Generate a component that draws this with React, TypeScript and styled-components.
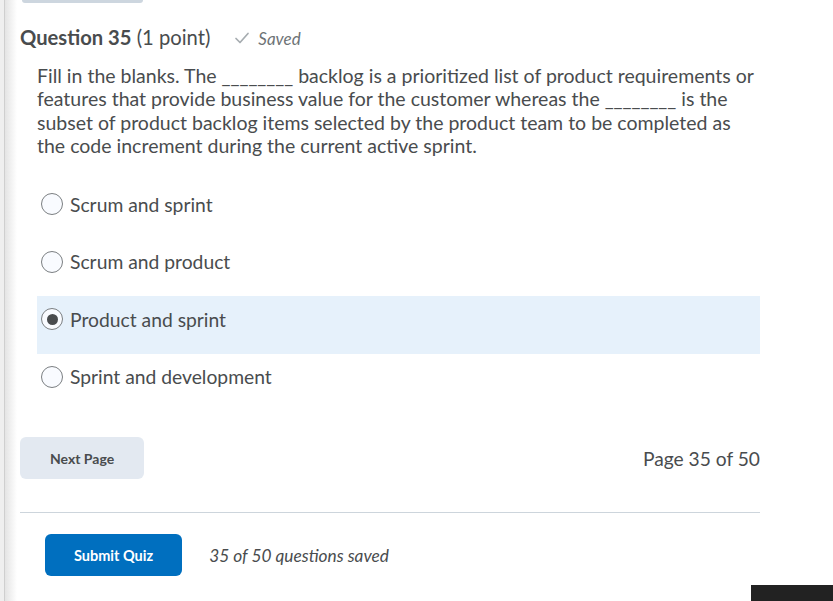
import React from "react";
import styled, { createGlobalStyle } from "styled-components";

const Global = createGlobalStyle`
  html, body { margin: 0; padding: 0; background: #fff; }
  body { font-family: Lato, "Open Sans", sans-serif; color: #494c4e; }
`;

const Frame = styled.div`
  position: relative;
  width: 833px;
  height: 601px;
  overflow: hidden;
  display: flex;
  background: #fff;
`;

const Edge = styled.div`
  width: 4px;
  flex: none;
  background: #efefef;
  border-right: 1px solid #cfcfcf;
`;

const Main = styled.div`
  flex: 1;
  padding: 0 73px 0 15px;
  background: linear-gradient(to right, #e4e4e4 0px, #ffffff 12px, #ffffff 100%);
  display: flex;
  flex-direction: column;
`;

const TopStub = styled.div`
  width: 121px;
  height: 3px;
  margin-left: 2px;
  background: #cdd6df;
  border-radius: 0 0 6px 6px;
`;

const Header = styled.div`
  display: flex;
  align-items: baseline;
  margin-top: 22px;
  height: 26px;
`;

const Title = styled.h2`
  margin: 0;
  font-size: 20.2px;
  font-weight: 400;
  color: #494c4e;
  b { font-weight: 700; }
`;

const Saved = styled.span`
  display: inline-flex;
  align-items: center;
  gap: 8px;
  margin-left: 24px;
  font-size: 17px;
  font-style: italic;
  color: #6e7376;
`;

const Prompt = styled.p`
  margin: 13px 0 0 17px;
  font-size: 19.5px;
  line-height: 23.3px;
  color: #494c4e;
`;

const Options = styled.div`
  margin: 24px 0 0 17px;
  display: flex;
  flex-direction: column;
`;

const Option = styled.label<{ $selected?: boolean }>`
  box-sizing: border-box;
  display: flex;
  align-items: center;
  height: 57.5px;
  padding: 0 0 11px 4px;
  gap: 7px;
  font-size: 19.3px;
  background: ${(p) => (p.$selected ? "#e6f1fb" : "transparent")};
`;

const Radio = styled.span<{ $checked?: boolean }>`
  box-sizing: border-box;
  width: 22px;
  height: 22px;
  border-radius: 50%;
  border: 1px solid #7b7f82;
  background: #f9fbff;
  display: flex;
  align-items: center;
  justify-content: center;
  &::after {
    content: "";
    display: ${(p) => (p.$checked ? "block" : "none")};
    width: 11px;
    height: 11px;
    border-radius: 50%;
    background: #494c4e;
  }
`;

const NavRow = styled.div`
  display: flex;
  justify-content: space-between;
  align-items: center;
  margin-top: 26px;
`;

const Button = styled.button<{ $primary?: boolean }>`
  font-family: Lato, "Open Sans", sans-serif;
  font-weight: 700;
  font-size: ${(p) => (p.$primary ? 14.5 : 14)}px;
  border: none;
  border-radius: 6px;
  height: 42px;
  padding: 0 ${(p) => (p.$primary ? 29 : 30)}px;
  background: ${(p) => (p.$primary ? "#006fbf" : "#e3e9f1")};
  color: ${(p) => (p.$primary ? "#ffffff" : "#494c4e")};
`;

const PageInfo = styled.span`
  font-size: 19.2px;
  color: #494c4e;
`;

const Divider = styled.hr`
  border: none;
  border-top: 1px solid #cdd5dc;
  margin: 33px 0 0 0;
`;

const SubmitRow = styled.div`
  display: flex;
  align-items: center;
  gap: 27px;
  margin-top: 21px;
  padding-left: 25px;
`;

const SavedCount = styled.span`
  font-size: 17.3px;
  font-style: italic;
  color: #494c4e;
`;

const Corner = styled.div`
  position: absolute;
  right: 0;
  bottom: 0;
  width: 82px;
  height: 16px;
  background: #222222;
`;

const options = [
  "Scrum and sprint",
  "Scrum and product",
  "Product and sprint",
  "Sprint and development",
];

export default function App() {
  return (
    <>
      <Global />
      <Frame>
        <Edge />
        <Main>
          <TopStub />
          <Header>
            <Title>
              <b>Question 35</b> (1 point)
            </Title>
            <Saved>
              <svg width="16" height="14" viewBox="0 0 16 14">
                <path d="M2 7.5 L6 11.5 L14 2.5" fill="none" stroke="#a6acb0" strokeWidth="1.7" strokeLinecap="round" strokeLinejoin="round" />
              </svg>
              Saved
            </Saved>
          </Header>
          <Prompt>
            Fill in the blanks. The ________ backlog is a prioritized list of product requirements or
            features that provide business value for the customer whereas the ________ is the
            subset of product backlog items selected by the product team to be completed as
            the code increment during the current active sprint.
          </Prompt>
          <Options>
            {options.map((o, i) => (
              <Option key={o} $selected={i === 2}>
                <Radio $checked={i === 2} />
                {o}
              </Option>
            ))}
          </Options>
          <NavRow>
            <Button>Next Page</Button>
            <PageInfo>Page 35 of 50</PageInfo>
          </NavRow>
          <Divider />
          <SubmitRow>
            <Button $primary>Submit Quiz</Button>
            <SavedCount>35 of 50 questions saved</SavedCount>
          </SubmitRow>
        </Main>
        <Corner />
      </Frame>
    </>
  );
}
